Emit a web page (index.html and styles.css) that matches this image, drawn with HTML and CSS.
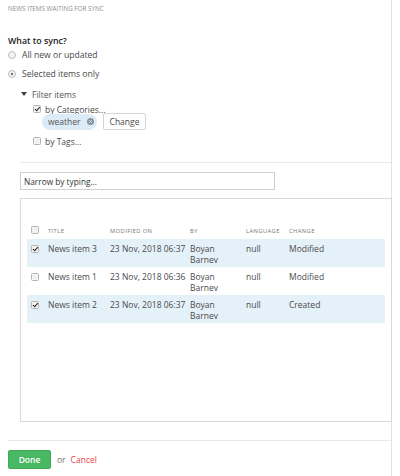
FILE: index.html
```html
<!DOCTYPE html>
<html>
<head>
<meta charset="utf-8">
<link rel="stylesheet" href="styles.css">
</head>
<body>
<div class="page">
  <div class="title">News items waiting for sync</div>
  <div class="heading">What to sync?</div>
  <label class="opt"><span class="radio"></span>All new or updated</label>
  <label class="opt"><span class="radio on"></span>Selected items only</label>
  <div class="filter">
    <div class="filter-head"><span class="tri"></span>Filter items</div>
    <div class="filter-body">
      <label class="chk-line"><span class="cb on"></span>by Categories...</label>
      <div class="chips">
        <span class="chip">weather <span class="x"><svg width="7" height="7" viewBox="0 0 10 10"><circle cx="5" cy="5" r="5" fill="#8a9299"/><path d="M3.2 3.2 L6.8 6.8 M6.8 3.2 L3.2 6.8" stroke="#dcebf6" stroke-width="1.4"/></svg></span></span>
        <button class="btn-change">Change</button>
      </div>
      <label class="chk-line tags"><span class="cb"></span>by Tags...</label>
    </div>
  </div>
  <div class="section">
    <hr class="sep">
    <input class="search" type="text" placeholder="Narrow by typing...">
    <div class="tablebox">
      <table class="grid">
        <thead>
          <tr><th class="c0"><span class="cb"></span></th><th class="c1">Title</th><th class="c2">Modified on</th><th class="c3">By</th><th class="c4">Language</th><th class="c5">Change</th></tr>
        </thead>
        <tbody>
          <tr class="sel"><td class="c0"><span class="cb on"></span></td><td>News item 3</td><td>23 Nov, 2018 06:37</td><td>Boyan<br>Barnev</td><td>null</td><td>Modified</td></tr>
          <tr><td class="c0"><span class="cb"></span></td><td>News item 1</td><td>23 Nov, 2018 06:36</td><td>Boyan<br>Barnev</td><td>null</td><td>Modified</td></tr>
          <tr class="sel"><td class="c0"><span class="cb on"></span></td><td>News item 2</td><td>23 Nov, 2018 06:37</td><td>Boyan<br>Barnev</td><td>null</td><td>Created</td></tr>
        </tbody>
      </table>
    </div>
  </div>
  <hr class="sep bottom">
  <div class="actions">
    <button class="btn-done">Done</button>
    <span class="or">or</span>
    <a class="cancel" href="#">Cancel</a>
  </div>
</div>
</body>
</html>
```

FILE: styles.css
```css
* { box-sizing: border-box; }
html, body { margin: 0; padding: 0; background: #fff; }
body {
  font-family: "Open Sans", "Noto Sans", sans-serif;
  font-size: 8.5px;
  color: #4a4a4a;
  width: 400px;
  height: 476px;
  overflow: hidden;
}
.page {
  margin-left: 8px;
  width: 384px;
  height: 476px;
  border-right: 1px solid #e2e2e2;
  padding-top: 5px;
}
.title {
  font-size: 6.3px;
  text-transform: uppercase;
  color: #8c8c8c;
  line-height: 8px;
}
.heading {
  margin-top: 22px;
  font-weight: 600;
  font-size: 8.8px;
  line-height: 12px;
  color: #222;
}
.opt {
  display: flex;
  align-items: center;
  height: 12px;
  margin-top: 2px;
  color: #4a4a4a;
  font-size: 8.6px;
}
.opt + .opt { margin-top: 7px; }
.radio {
  width: 8px; height: 8px;
  border: 1px solid #bdbdbd;
  border-radius: 50%;
  background: #f3f3f3;
  margin-right: 6px;
  position: relative;
}
.radio.on::after {
  content: "";
  position: absolute;
  left: 2px; top: 2px;
  width: 2px; height: 2px;
  border-radius: 50%;
  background: #444;
}
.filter { margin-top: 8px; padding-left: 13px; }
.filter-head {
  display: flex; align-items: center; height: 12px; color: #555;
}
.tri {
  width: 0; height: 0;
  border-left: 3px solid transparent;
  border-right: 3px solid transparent;
  border-top: 4px solid #444;
  margin-right: 5px;
}
.filter-body { padding-left: 12px; }
.chk-line {
  display: flex; align-items: center; height: 12px; margin-top: 3px; color: #4a4a4a;
}
.cb {
  display: inline-block;
  width: 8px; height: 8px;
  border: 1px solid #b5b5b5;
  border-radius: 1.5px;
  background: #f2f2f2;
  margin-right: 4px;
  position: relative;
}
.cb.on::after {
  content: "";
  position: absolute;
  left: 2px; top: 0px;
  width: 2px; height: 3.5px;
  border-right: 1.4px solid #222;
  border-bottom: 1.4px solid #222;
  transform: rotate(40deg);
}
.chips {
  display: flex; align-items: center; margin-top: -2px; margin-left: 9px;
}
.chip {
  display: inline-flex; align-items: center;
  height: 16px;
  padding: 0 6px 0 6px;
  background: #dcebf6;
  border-radius: 8px;
  color: #555;
  width: 55px;
}
.chip .x { display: inline-flex; margin-left: 6px; }
.btn-change {
  margin-left: 6px;
  height: 17px;
  width: 43px;
  padding: 0;
  font-family: inherit;
  font-size: 8.5px;
  color: #4a4a4a;
  background: #fff;
  border: 1px solid #d4d4d4;
  border-radius: 2px;
}
.tags { margin-top: 5px; }
.section { padding-left: 12px; }
.sep {
  border: 0;
  border-top: 1px solid #e8e8e8;
  margin: 15px 0 0 0;
  height: 0;
}
.search {
  display: block;
  margin-top: 9px;
  width: 255px;
  height: 18px;
  border: 1px solid #cfcfcf;
  border-radius: 0;
  padding: 0 3px;
  font-family: inherit;
  font-size: 8.3px;
  color: #333;
}
.search::placeholder { color: #333; }
.tablebox {
  margin-top: 8px;
  width: 372px;
  height: 224px;
  border: 1px solid #d9d9d9;
  padding: 24px 6px 0 6px;
}
.grid {
  width: 100%;
  border-collapse: collapse;
  table-layout: fixed;
}
.grid th {
  font-weight: 400;
  text-transform: uppercase;
  font-size: 5.8px;
  letter-spacing: 0.4px;
  color: #777;
  text-align: left;
  height: 16px;
  vertical-align: middle;
  padding: 0;
}
.grid td {
  text-align: left;
  vertical-align: top;
  padding: 4px 0 0 0;
  height: 28px;
  line-height: 11px;
  color: #4a4a4a;
  font-size: 8.5px;
}
.grid tr.sel td { background: #e5f1f9; }
.grid .c0 { width: 21px; padding-left: 4px; }
.grid td.c0 { padding-top: 5px; }
.grid .c0 .cb { margin: 0; }
.grid .c1 { width: 62px; }
.grid .c2 { width: 80px; }
.grid .c3 { width: 56px; }
.grid .c4 { width: 43px; }
.bottom { margin-top: 18px; }
.actions {
  display: flex; align-items: center; margin-top: 9px;
}
.btn-done {
  width: 43px; height: 19px;
  background: #49b863;
  border: 1px solid #3fa958;
  border-radius: 2px;
  color: #fff;
  font-family: inherit;
  font-size: 8.5px;
  font-weight: 600;
  padding: 0;
}
.or { margin-left: 6px; color: #777; }
.cancel { margin-left: 5px; color: #f2434a; text-decoration: none; }
```
